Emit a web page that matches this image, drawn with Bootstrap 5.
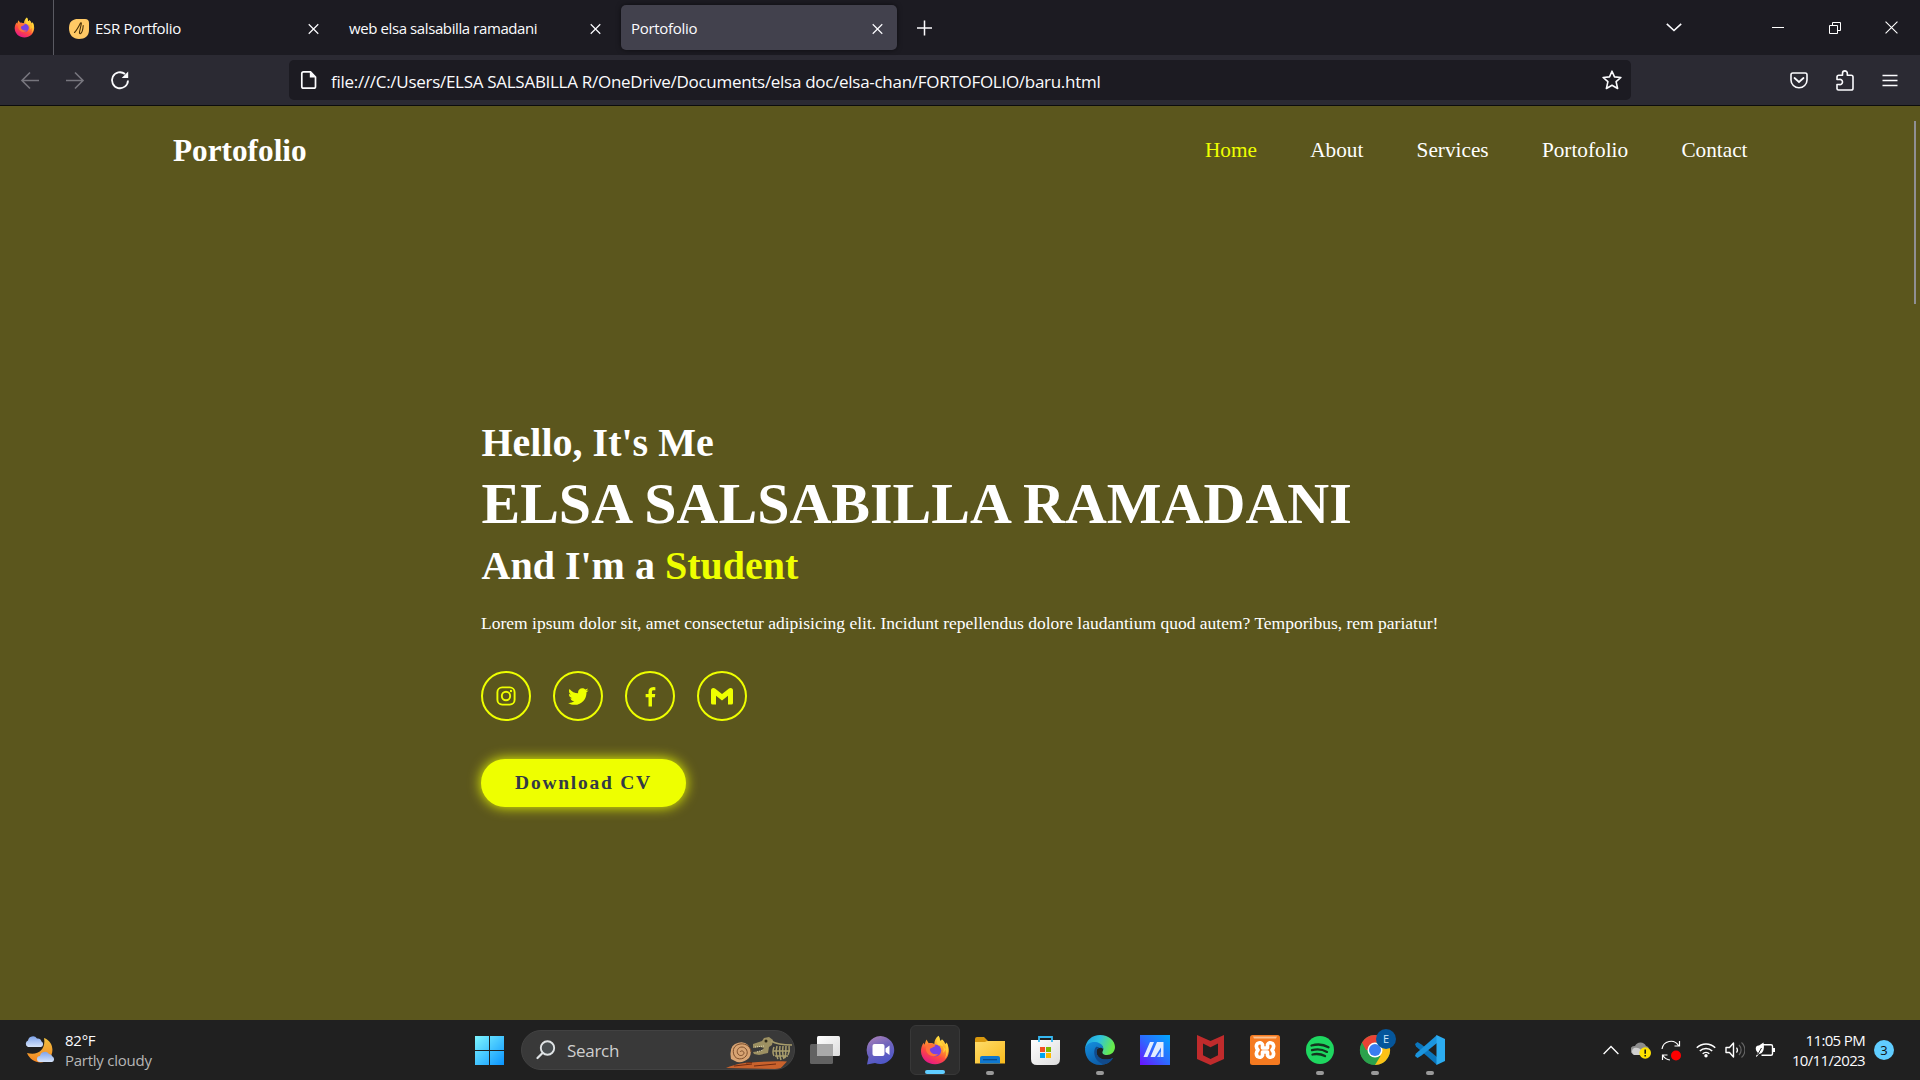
<!DOCTYPE html>
<html lang="en">
<head>
<meta charset="utf-8">
<title>Portofolio</title>
<link href="https://cdn.jsdelivr.net/npm/bootstrap@5.3.0/dist/css/bootstrap.min.css" rel="stylesheet">
<style>
:root{--lime:#eeff00;--olive:#5b561d}
body{width:1920px;height:1080px;overflow:hidden;background:var(--olive);font-family:"Open Sans","Noto Sans",sans-serif;color:#fbfbfe}
svg{display:block;flex:none}
.tabstrip{height:55px;background:#1c1b22;font-size:15px}
.pinned{width:54px;border-right:1px solid #5a5a62;padding-left:14px}
.browser-tab{height:45px;width:276px;border-radius:5px;margin-right:6px;padding:2px 14px 0 10px;letter-spacing:-.3px;white-space:nowrap}
.browser-tab.first-tab{width:279px;padding-left:15px}
.browser-tab.current{background:#42414d;box-shadow:0 0 5px #0008}
.favicon-gap{margin-left:6px}
.tight{letter-spacing:-.4px}
.win-controls{padding-right:22px}
.toolbar-row{height:51px;background:#2b2a33;border-bottom:1px solid #0c0c0d;padding-left:19px}
.tool-icons{padding-right:22px}
.nav-gap{margin-left:23px}
.urlbox{width:1342px;height:40px;margin-left:158px;background:#1c1b22;border-radius:5px;padding:0 9px 0 11px;font-size:17px}
.url-text{margin-left:13px;white-space:nowrap;letter-spacing:-.285px;padding-top:3px}
.site{height:914px;font-family:"Liberation Serif",serif;color:#fff;position:relative}
.site-nav{height:88px;padding:0 172.500px 0 173px}
.logo{font-size:31.25px;font-weight:700;line-height:36px;padding-top:1px}
.menu{gap:53.3px;font-size:21.25px;line-height:24px}
.menu a{color:#fff;text-decoration:none}
.menu a.active{color:var(--lime)}
.hero{margin-left:481px;padding-top:226px}
.hero h3{font-size:40px;font-weight:700;line-height:46px;margin:0;padding-left:.5px}
.hero h1{font-size:58px;font-weight:700;line-height:66px;margin:5px 0 6px;padding-left:.5px;white-space:nowrap}
.hero p{font-size:17.5px;line-height:24px;margin:22px 0 36px;white-space:nowrap}
.lime{color:var(--lime)}
.social{gap:22px}
.social a{width:50px;height:50px;border:2px solid var(--lime);color:var(--lime)}
.cv{width:205px;height:48px;margin-top:38px;background:var(--lime);box-shadow:0 0 13px var(--lime);color:#323946;font-size:19.5px;font-weight:700;letter-spacing:1.75px;text-decoration:none;white-space:nowrap}
.scroll-thumb{position:absolute;right:4px;top:15px;width:2px;height:183px;background:#8f8f94}
.taskbar{height:60px;background:#202020}
.weather{width:443px;padding-left:25px;font-size:15px;line-height:20px;letter-spacing:-.25px}
.weather-text{margin-left:10px}
.muted{color:#b6b6b6}
.searchbox{width:274px;height:40px;background:#393939;border:1px solid #424242;font-size:17px;color:#cfcfcf;margin-left:17px;overflow:hidden;padding-left:14px;letter-spacing:-.3px}
.search-label{margin-left:11px;padding-top:2px}
.apps{margin-left:5px}
.app{width:50px;height:50px;margin-right:5px;border-radius:6px;position:relative}
.app.on{background:#2d2d2d;border:1px solid #383838}
.app.run::after,.app.on::after{content:"";position:absolute;left:50%;bottom:0;width:8px;height:4px;margin-left:-4px;border-radius:2px;background:#9a9a9a}
.app.on::after{width:20px;margin-left:-10px;background:#60cdff}
.tray{margin-left:143px}
.clock{width:100px;margin-left:-10px;font-size:15px;line-height:20px;letter-spacing:-.65px;padding-bottom:1px}
.count{width:20px;height:20px;background:#60cdff;color:#111;font-size:13px;line-height:20px;margin-left:9px}
</style>
</head>
<body>
<svg width="0" height="0" class="position-absolute">
<defs>
<linearGradient id="ffo" x1=".8" y1="0" x2=".3" y2="1"><stop offset="0" stop-color="#fff44f"/><stop offset=".35" stop-color="#ffa92a"/><stop offset=".65" stop-color="#ff4b3e"/><stop offset="1" stop-color="#e3158c"/></linearGradient>
<linearGradient id="win" x1="0" y1="0" x2="1" y2="1"><stop offset="0" stop-color="#7ef6ff"/><stop offset="1" stop-color="#0a94ff"/></linearGradient>
<linearGradient id="moon" x1="0" y1="0" x2="0" y2="1"><stop offset="0" stop-color="#f0c040"/><stop offset="1" stop-color="#f58420"/></linearGradient>
<linearGradient id="cloud" x1="0" y1="0" x2="0" y2="1"><stop offset="0" stop-color="#7fa4ea"/><stop offset="1" stop-color="#d6e4fa"/></linearGradient>
<linearGradient id="chat" x1="0" y1="0" x2=".4" y2="1"><stop offset="0" stop-color="#b285b8"/><stop offset=".5" stop-color="#7064bc"/><stop offset="1" stop-color="#5058c8"/></linearGradient>
<linearGradient id="fold" x1="0" y1="0" x2="1" y2="1"><stop offset="0" stop-color="#ffdc6a"/><stop offset="1" stop-color="#f9ba1c"/></linearGradient>
<linearGradient id="edge1" x1="0" y1="0" x2="1" y2=".3"><stop offset="0" stop-color="#1b9de2"/><stop offset=".5" stop-color="#2fc2df"/><stop offset="1" stop-color="#67eb4c"/></linearGradient>
<linearGradient id="edge2" x1="0" y1="0" x2=".6" y2="1"><stop offset="0" stop-color="#1490df"/><stop offset="1" stop-color="#0c59a4"/></linearGradient>
<linearGradient id="asus" x1="1" y1="0" x2="0" y2="1"><stop offset="0" stop-color="#00a8ff"/><stop offset=".5" stop-color="#2c6cff"/><stop offset="1" stop-color="#6b10ff"/></linearGradient>
<linearGradient id="glass" x1="0" y1="0" x2="1" y2="1"><stop offset="0" stop-color="#fff"/><stop offset="1" stop-color="#dcdcdc"/></linearGradient>
<symbol id="fox" viewBox="0 0 30 30" preserveAspectRatio="none">
<path d="M18.500 .8c.8 1.300 1.500 3.200 1.500 5 1.200-.1 1.600-.8 1.900-1.500 1.600 1.200 3 3 3.300 4.700.8-.2 1.200-.8 1.500-1.500 1.500 3 2.300 5.900 2.100 9C28.300 24 22.500 29.300 15 29.300S1.200 23.800 1 16.500c-.1-3 .8-6.200 2.600-8.700l.8 2 2-5.300 2.300 3.800c2-.5 4-.2 5.600.8 0-3.300 1.700-6.600 4.200-8.300z" fill="url(#ffo)"/>
<circle cx="15.200" cy="15.500" r="6" fill="#7542e5"/>
<path d="M8.500 8.500c3-.6 5.500.5 7 2.500l-3 1.500c-1 .6-2.500.7-2.700 2.100.5 4 5 5.600 8.500 4.200-2.500 4.500-11 2.500-12.300-3.500-.5-2.700.5-5.200 2.500-6.800z" fill="#ff7139"/>
<path d="M18.500.8c.8 1.500 1.500 3.500 1.800 5.500 2.700 3 4.300 7 2.700 11.500 2.400-1.500 3.600-4.500 2.200-8.800.8-.2 1.200-.8 1.500-1.500 3 7 1 13-2 16.500C29 15 24 10 18 10c-2-3-1.500-6.500.5-9.200z" fill="#ffd93b" opacity=".75"/>
</symbol>
<symbol id="cross" viewBox="0 0 12 12"><path d="M.8.8l10.400 10.400M11.200.8L.8 11.200" stroke="#fbfbfe" stroke-width="1.300" fill="none"/></symbol>
</defs>
</svg>

<header>
<div class="tabstrip d-flex align-items-center">
  <div class="pinned h-100 d-flex align-items-center"><svg width="21" height="21"><use href="#fox" width="21" height="21"/></svg></div>
  <div class="d-flex align-items-center">
    <div class="browser-tab first-tab d-flex align-items-center">
      <svg width="20" height="20" viewBox="0 0 20 20"><path d="M0 9C0 2.500 4 0 9 0h7q4 0 4 4v7c0 6-4 9-10 9S0 16 0 9z" fill="#ffc965"/><path d="M5.500 13.500C8 11 10 7 11.500 4c.6-.8 1 0 .8.800L10.500 13q-.2 2.200 1.200 1.500c1.400-1 2.300-5 2.500-8" stroke="#4b3208" stroke-width="1.100" fill="none" stroke-linecap="round"/></svg>
      <span class="favicon-gap me-auto">ESR Portfolio</span>
      <svg width="11" height="12"><use href="#cross" width="11" height="12"/></svg>
    </div>
    <div class="browser-tab d-flex align-items-center">
      <span class="me-auto tight">web elsa salsabilla ramadani</span>
      <svg width="11" height="12"><use href="#cross" width="11" height="12"/></svg>
    </div>
    <div class="browser-tab current d-flex align-items-center">
      <span class="me-auto">Portofolio</span>
      <svg width="11" height="12"><use href="#cross" width="11" height="12"/></svg>
    </div>
  </div>
  <svg class="ms-2" width="26" height="16" viewBox="0 0 26 16"><path d="M13.500 .5v15M6 8h15" stroke="#fbfbfe" stroke-width="1.500"/></svg>
  <div class="win-controls d-flex align-items-center ms-auto">
    <svg width="16" height="9" viewBox="0 0 16 9" style="margin-right:90px"><path d="M.8.8L8 7.500 15.200.8" fill="none" stroke="#fbfbfe" stroke-width="1.600"/></svg>
    <svg width="12" height="2" style="margin-right:45px"><path d="M0 .5h12" stroke="#fff"/></svg>
    <svg width="12" height="12" viewBox="0 0 12 12" style="margin-right:44px"><path d="M.5 3.500h8v8h-8zM3.500 3.500v-3h8v8h-3" fill="none" stroke="#fff"/></svg>
    <svg width="13" height="13" viewBox="0 0 14 14"><path d="M.6.6l12.800 12.800M13.400.6L.6 13.400" stroke="#fff" stroke-width="1.200"/></svg>
  </div>
</div>
<div class="toolbar-row d-flex align-items-center">
  <svg width="22" height="20" viewBox="0 0 22 20"><path d="M20 10.500H3M11 2.500L3 10.500l8 8" fill="none" stroke="#77767e" stroke-width="1.600"/></svg>
  <svg class="nav-gap" width="22" height="20" viewBox="0 0 22 20"><path d="M2 10.500h17M11 2.500l8 8-8 8" fill="none" stroke="#77767e" stroke-width="1.600"/></svg>
  <svg class="nav-gap" width="22" height="22" viewBox="0 0 22 22"><path d="M16 5a8 8 0 1 0 3 6.500" fill="none" stroke="#fbfbfe" stroke-width="1.800"/><path d="M19.200 2.500v6.500H12.700z" fill="#fbfbfe"/></svg>
  <div class="urlbox d-flex align-items-center">
    <svg width="18" height="20" viewBox="0 0 18 20"><path d="M3.500 1.800h7l5 5.200v9.400q0 1.800-1.800 1.800H3.600q-1.800 0-1.800-1.800V3.600q0-1.800 1.700-1.800z" fill="none" stroke="#fbfbfe" stroke-width="1.700"/><path d="M9.800 1.500v6h6z" fill="#fbfbfe"/></svg>
    <span class="url-text me-auto">file:///C:/Users/ELSA SALSABILLA R/OneDrive/Documents/elsa doc/elsa-chan/FORTOFOLIO/baru.html</span>
    <svg width="20" height="20" viewBox="0 0 20 20"><path d="M10 1.200l2.500 5.700 6.400.6-4.800 4.200 1.500 6.800L10 15.200l-5.600 3.300 1.500-6.800L1.100 7.500l6.400-.6z" fill="none" stroke="#fbfbfe" stroke-width="1.600" stroke-linejoin="round"/></svg>
  </div>
  <div class="tool-icons d-flex align-items-center ms-auto">
    <svg width="18" height="17" viewBox="0 0 18 17" style="margin-right:28px"><path d="M2.800 1h12.400Q17 1 17 2.800V8a8 7.800 0 0 1-16 0V2.800Q1 1 2.800 1z" fill="none" stroke="#fbfbfe" stroke-width="1.600"/><path d="M4.500 6L9 10l4.500-4" fill="none" stroke="#fbfbfe" stroke-width="1.700" stroke-linecap="round"/></svg>
    <svg width="18" height="21" viewBox="0 0 18 21" style="margin-right:28px"><path d="M1 19V14.500h2.200a2.600 2.600 0 1 0 0-5H1V7q0-1.800 1.800-1.800H6.500V3.300a2.400 2.400 0 0 1 4.800 0v1.900H15.200Q17 5.200 17 7v11.200q0 1.800-1.800 1.800H2.500Q1 20 1 18.500z" fill="none" stroke="#fbfbfe" stroke-width="1.600" stroke-linejoin="round"/></svg>
    <svg width="16" height="13" viewBox="0 0 16 13"><path d="M.5 1.500h15M.5 6.500h15M.5 11.500h15" stroke="#fbfbfe" stroke-width="1.500"/></svg>
  </div>
</div>
</header>

<main class="site">
  <nav class="site-nav d-flex align-items-center justify-content-between">
    <span class="logo">Portofolio</span>
    <div class="menu d-flex">
      <a class="active" href="#">Home</a><a href="#">About</a><a href="#">Services</a><a href="#">Portofolio</a><a href="#">Contact</a>
    </div>
  </nav>
  <section class="hero">
    <h3>Hello, It's Me</h3>
    <h1>ELSA SALSABILLA RAMADANI</h1>
    <h3>And I'm a <span class="lime">Student</span></h3>
    <p>Lorem ipsum dolor sit, amet consectetur adipisicing elit. Incidunt repellendus dolore laudantium quod autem? Temporibus, rem pariatur!</p>
    <div class="social d-flex">
      <a class="rounded-circle d-flex align-items-center justify-content-center" href="#"><svg width="20" height="20" viewBox="0 0 20 20" fill="none" stroke="currentColor" stroke-width="1.900"><rect x="1.400" y="1.400" width="17.200" height="17.200" rx="4.800"/><circle cx="10" cy="10" r="4.200"/><circle cx="15" cy="5" r="1.200" fill="currentColor" stroke="none"/></svg></a>
      <a class="rounded-circle d-flex align-items-center justify-content-center" href="#"><svg width="25" height="25" viewBox="0 0 24 24" fill="currentColor"><path d="M19.633 7.997c.013.175.013.349.013.523 0 5.325-4.053 11.461-11.460 11.461-2.282 0-4.402-.661-6.186-1.809.324.037.636.050.973.050a8.070 8.070 0 0 0 5.001-1.721 4.036 4.036 0 0 1-3.767-2.793c.249.037.499.062.761.062.361 0 .724-.050 1.061-.137a4.027 4.027 0 0 1-3.230-3.953v-.050c.537.299 1.160.486 1.820.511a4.022 4.022 0 0 1-1.796-3.354c0-.748.199-1.434.548-2.032a11.457 11.457 0 0 0 8.306 4.215c-.062-.300-.100-.611-.100-.923a4.026 4.026 0 0 1 4.028-4.028c1.160 0 2.207.486 2.943 1.272a7.957 7.957 0 0 0 2.556-.973 4.020 4.020 0 0 1-1.771 2.220 8.073 8.073 0 0 0 2.319-.624 8.645 8.645 0 0 1-2.019 2.083z"/></svg></a>
      <a class="rounded-circle d-flex align-items-center justify-content-center" href="#"><svg width="25" height="25" viewBox="0 0 24 24" fill="currentColor"><path d="M13.397 21.500v-8.700h2.765l.411-3.209h-3.176V7.548c0-.926.258-1.560 1.587-1.560h1.684V3.127A22.336 22.336 0 0 0 14.201 3c-2.444 0-4.122 1.492-4.122 4.231v2.355H7.332v3.209h2.753V21.500h3.312z"/></svg></a>
      <a class="rounded-circle d-flex align-items-center justify-content-center" href="#"><svg width="22" height="17" viewBox="0 0 22 17" fill="currentColor"><path d="M0 2.600Q0 0 2.400 0 3.300 0 4 .6L11 6l7-5.400Q18.700 0 19.600 0 22 0 22 2.600V15q0 1.600-1.600 1.600H17V7.800l-6 4.600-6-4.600v8.800H1.600Q0 16.600 0 15z"/></svg></a>
    </div>
    <a class="cv rounded-pill d-flex align-items-center justify-content-center" href="#">Download CV</a>
  </section>
  <div class="scroll-thumb"></div>
</main>

<footer class="taskbar d-flex align-items-center">
  <div class="weather d-flex align-items-center">
    <svg width="30" height="28" viewBox="0 0 30 28"><path d="M19 2c9 3 11 14 5 21-6 6-18 4-22-6 12 3 19-4 17-15z" fill="url(#moon)"/><path d="M3 11a3.500 3.500 0 0 1 0-6.500A5 5 0 0 1 12 2.500a4 4 0 0 1 4.500 3A3 3 0 0 1 16 11z" fill="url(#cloud)"/><path d="M15 26a3 3 0 0 1 0-6 5 5 0 0 1 9-2 4 4 0 0 1 3.500 2.500A3 3 0 0 1 27 26z" fill="url(#cloud)"/></svg>
    <div class="weather-text"><div>82°F</div><div class="muted">Partly cloudy</div></div>
  </div>
  <svg width="61" height="29" viewBox="-32 0 61 29"><path d="M0 0h14v14H0zM15 0h14v14H15zM0 15h14v14H0zM15 15h14v14H15z" fill="url(#win)"/></svg>
  <div class="searchbox rounded-pill d-flex align-items-center">
    <svg width="20" height="20" viewBox="0 0 20 20"><circle cx="11.500" cy="8" r="6.700" fill="#484d50" stroke="#dfe3e5" stroke-width="1.900"/><path d="M6.500 13L1.500 18" stroke="#dfe3e5" stroke-width="2.200" stroke-linecap="round"/></svg>
    <span class="search-label me-auto">Search</span>
    <svg width="70" height="38" viewBox="0 0 70 38">
      <path d="M2 37c10-4 18-5.500 26-5.500 12-1 25-1.500 35-1l-7 7.500z" fill="#c9622c"/><path d="M10 35l18-2M30 35l22-2M22 32l6-.500" stroke="#6e2b12"/>
      <path d="M7 28q-2-12 4-15 8-4 13 1 5 7 1 13-5 5-12 4z" fill="#d8a473"/><path d="M16 21c1-2 4-1 4 1s-4 4-6 1 0-7 4-7 7 5 4 9-10 4-12-1 0-10 6-11 11 3 11 8" fill="none" stroke="#7c4e2b"/>
      <path d="M29 13l9-3 2-3 5-1 4 3-1 5-3 2-1 6-9 2-5-1-1-2 8-1 3-3-4-1-7 1z" fill="#9c9062"/><path d="M31 16l9-1M33 21l6-2" stroke="#e0d8b0" stroke-dasharray="1 1"/><circle cx="42" cy="10" r="1.500" fill="#2c2819"/>
      <path d="M47 10c5 3 12 4 21 4M50 16q-2 5 0 9M53 15q-2 8 1 13M56 15q-1 8 1 14M59 15q-1 8 1 13M62 15q0 7-1 12M65 15q1 5-1 9M49 20h17M51 25h13" stroke="#a89d6c" stroke-width="1.500" fill="none"/></svg>
  </div>
  <div class="apps d-flex">
    <div class="app d-flex align-items-center justify-content-center"><svg width="30" height="28" viewBox="0 0 30 28"><rect y="8" width="23" height="20" rx="1.500" fill="#626262"/><rect x="7" y="0" width="23" height="20" rx="1.500" fill="url(#glass)"/><path d="M7 8h16v12H8.500Q7 20 7 18.500z" fill="#a9a9a9"/></svg></div>
    <div class="app d-flex align-items-center justify-content-center"><svg width="29" height="29" viewBox="0 0 29 29"><path d="M14.500 0a14 14 0 1 1-5.500 27L1 28.500 2.500 21A14 14 0 0 1 14.500 0z" fill="url(#chat)"/><rect x="6.500" y="8" width="12" height="12" rx="2" fill="#fff"/><path d="M19.500 12.500l4-3v9.500l-4-3z" fill="#fff"/></svg></div>
    <div class="app on d-flex align-items-center justify-content-center"><svg width="30" height="30"><use href="#fox" width="30" height="30"/></svg></div>
    <div class="app run d-flex align-items-center justify-content-center"><svg width="30" height="27" viewBox="0 0 30 27"><path d="M0 2q0-2 2-2h7l4 4h15q2 0 2 2v4H0z" fill="#d9980d"/><path d="M0 5h10l2-1h18v22.500H0z" fill="url(#fold)"/><path d="M5 26.500V21q0-2 2-2h16q2 0 2 2v5.500z" fill="#0f78d0"/><path d="M8 22.700h14" stroke="#0a4a8a" stroke-width="1.200"/></svg></div>
    <div class="app d-flex align-items-center justify-content-center"><svg width="29" height="29" viewBox="0 0 29 29"><path d="M8 6V1h13v5" fill="none" stroke="#35b8f1" stroke-width="1.800"/><path d="M0 4h29v19q0 6-6 6H6q-6 0-6-6z" fill="url(#glass)"/><path d="M8 6V4M21 6V4" stroke="#35b8f1" stroke-width="1.800"/><path d="M9 11h5v5H9z" fill="#f25022"/><path d="M15 11h5v5h-5z" fill="#7fba00"/><path d="M9 17h5v5H9z" fill="#00a4ef"/><path d="M15 17h5v5h-5z" fill="#ffb900"/></svg></div>
    <div class="app run d-flex align-items-center justify-content-center"><svg width="30" height="30" viewBox="0 0 30 30"><path d="M0 14C1 5 7 0 15 0c9 0 15 6 15 12 0 5-4 8-8 8s-5-2-4.500-3.300C20 13 17 9 12 9 6 9 1 12 0 14z" fill="url(#edge1)"/><path d="M0 14C1 9 6 6.500 10.500 7c5 .5 8.500 4 7.500 7-1-2-6-2-6.500 2-.5 7 7 11 16.500 7-3 5-8 7-13 7C6 30 0 23 0 14z" fill="url(#edge2)"/><path d="M11 12c-3 3-3 14 8 17.500 4-1 7-3 9-6.500-9 4-17 0-16.500-7 0-2 1.500-3 3-3.200-1.300-.8-2.500-1.200-3.500-.8z" fill="#114a8b"/></svg></div>
    <div class="app d-flex align-items-center justify-content-center"><svg width="30" height="30" viewBox="0 0 30 30"><path d="M0 0h30v30H0z" fill="url(#asus)"/><path d="M3.500 22L10 7h4L7.500 22zM10.500 22L17 7h6.500v15H21V12.500L15 22z" fill="#e2ecff"/><path d="M17 22l3.500-5.500V22z" fill="#b8ccff"/></svg></div>
    <div class="app d-flex align-items-center justify-content-center"><svg width="27" height="30" viewBox="0 0 27 30"><path d="M0 0l13.500 6L27 0v24l-13.500 6L0 24zM6 8.500v11.800l7.500 3.700 7.500-3.700V8.500l-7.500 3.700z" fill="#c02b2c" fill-rule="evenodd"/></svg></div>
    <div class="app d-flex align-items-center justify-content-center"><svg width="30" height="30" viewBox="0 0 30 30"><rect width="30" height="30" rx="2.500" fill="#f57a20"/><path d="M3 1.500h24l-1 2H4z" fill="#fac090"/><path d="M7.500 8.500Q11 6.500 12.500 9.500V13h5V9.500Q19 6.500 22.500 8.500 25 11.500 22 15 25 18.500 22.500 21.500 19 23.500 17.500 20.500V17h-5v3.500Q11 23.500 7.500 21.500 5 18.500 8 15 5 11.500 7.500 8.500z" fill="none" stroke="#fff" stroke-width="3.600" stroke-linejoin="round"/></svg></div>
    <div class="app run d-flex align-items-center justify-content-center"><svg width="28" height="28" viewBox="0 0 28 28"><circle cx="14" cy="14" r="14" fill="#1ed760"/><path d="M5.500 9.500c6-1.700 12-1.200 17 1.700M6 14.200c5-1.300 10.500-.8 15 1.700M6.500 18.500c4.500-1 8.500-.6 12.500 1.600" fill="none" stroke="#14331f" stroke-width="2.300" stroke-linecap="round"/></svg></div>
    <div class="app run d-flex align-items-center justify-content-center"><svg width="42" height="42" viewBox="-6 -6 42 42"><circle cx="15" cy="15" r="15" fill="#2ba24c"/><path d="M15 15l13-7.500A15 15 0 0 1 15 30z" fill="#fbc116"/><path d="M15 15L2 7.500A15 15 0 0 0 15 30l5.500-9z" fill="#2ba24c"/><path d="M2 7.500A15 15 0 0 1 28 7.500H15v7.500H6z" fill="#ea4335"/><circle cx="15" cy="15" r="7.500" fill="#fff"/><circle cx="15" cy="15" r="6" fill="#3a7df0"/><circle cx="26" cy="4" r="10" fill="#05569b"/><text x="26" y="8" font-size="11" fill="#cfe6fa" text-anchor="middle">E</text></svg></div>
    <div class="app run d-flex align-items-center justify-content-center"><svg width="30" height="30" viewBox="0 0 30 30"><path d="M0 9l2.500-2 4 2.500L22 22v8L1 11.500z" fill="#0b76bd"/><path d="M0 21l2.500 2 4-2.500L22 8V0L1 18.500z" fill="#1b95de"/><path d="M21.500 0L30 4v22l-8.500 4z" fill="#2cacf0"/></svg></div>
  </div>
  <div class="tray d-flex align-items-center">
    <svg width="16" height="10" viewBox="0 0 16 10"><path d="M.6 9L8 1.500 15.400 9" fill="none" stroke="#fff" stroke-width="1.300"/></svg>
    <svg width="20" height="18" viewBox="0 0 20 18" style="margin-left:12px"><path d="M3 13a4 4 0 0 1 1-8 6 6 0 0 1 11 0 4 4 0 0 1 3 4v4z" fill="#8d8d8d"/><path d="M3 14a4 4 0 0 1 0-7c3-1 6 0 8 3v4z" fill="#cfcfcf"/><circle cx="14.200" cy="12" r="5.800" fill="#fde100"/><path d="M14.200 8.500v4.200M14.200 14v1.600" stroke="#111" stroke-width="1.500"/></svg>
    <svg width="20" height="21" viewBox="0 0 20 21" style="margin-left:10px"><path d="M1 9A9 9 0 0 1 17.500 5.500M18.500 1v5h-5M1.500 20v-5h5M2 15.500A9 9 0 0 0 9 20" fill="none" stroke="#fff" stroke-width="1.200"/><circle cx="15" cy="15.500" r="5" fill="#f00"/></svg>
    <svg width="20" height="16" viewBox="0 0 20 16" style="margin-left:15px"><path d="M.8 5.800a13 13 0 0 1 18.400 0M3.800 9a8.800 8.800 0 0 1 12.400 0M6.700 11.800a4.700 4.700 0 0 1 6.600 0" fill="none" stroke="#fff" stroke-width="1.600"/><circle cx="10" cy="13.700" r="1.700" fill="#fff"/></svg>
    <svg width="20" height="18" viewBox="0 0 20 18" style="margin-left:9px"><path d="M1 6.500h3.500L8.500 2v14L4.500 11.500H1z" fill="none" stroke="#fff" stroke-width="1.400" stroke-linejoin="round"/><path d="M11.500 6.500a4 4 0 0 1 0 5" fill="none" stroke="#fff" stroke-width="1.200"/><path d="M14 4a7 7 0 0 1 0 10M16.500 1.500a10 10 0 0 1 0 15" fill="none" stroke="#666" stroke-width="1.200"/></svg>
    <svg width="20" height="16" viewBox="0 0 20 16" style="margin-left:10px"><path d="M8 2.700h8q1.500 0 1.500 1.500v7.600q0 1.500-1.500 1.500H6.500" fill="none" stroke="#fff" stroke-width="1.400"/><path d="M18 6h2v4h-2z" fill="#fff"/><path d="M8.500.5C9.500 6 9 11 4 12l-2.500 3-.5-1 2-3C-1 7 1 3 4 3.500z" fill="#fff"/><path d="M2.500 13L6.500 6" stroke="#202020" stroke-width="1"/></svg>
    <div class="clock text-end"><div>11:05 PM</div><div>10/11/2023</div></div>
    <div class="count rounded-circle text-center">3</div>
  </div>
</footer>
<script src="https://cdn.jsdelivr.net/npm/bootstrap@5.3.0/dist/js/bootstrap.bundle.min.js"></script>
</body>
</html>
